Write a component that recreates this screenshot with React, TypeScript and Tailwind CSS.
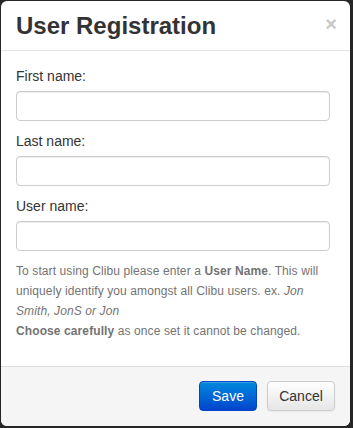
import React from "react";

export default function App() {
  const font = { fontFamily: '"Liberation Sans", Arial, Helvetica, sans-serif' };
  return (
    <div className="w-[353px] h-[428px] bg-[#262626] pt-[1px] pl-[1px]" style={font}>
      <div className="w-[349px] h-[425px] bg-white rounded-[6px] flex flex-col overflow-hidden">
        <div className="h-[49px] border-b border-[#e5e5e5] box-content px-[15px] flex items-center justify-between">
          <h3 className="text-[24px] font-bold leading-[26px] text-[#333] pt-[1px]">User Registration</h3>
          <span className="text-[20px] font-bold leading-[20px] text-[#c8c8c8] mr-[-2px] mt-[-4px]">×</span>
        </div>
        <div className="px-[15px] pt-[15px] flex-1">
          {["First name:", "Last name:", "User name:"].map((l) => (
            <div key={l} className="mb-[10px]">
              <label className="block text-[14px] leading-[20px] text-[#333] mb-[5px]">{l}</label>
              <input
                type="text"
                className="block w-[314px] h-[30px] border border-[#cccccc] rounded-[4px] bg-white shadow-[inset_0_1px_1px_rgba(0,0,0,0.075)] outline-none"
              />
            </div>
          ))}
          <p className="text-[12px] leading-[20px] text-[#737373] w-[312px] tracking-[0.1px]">
            To start using Clibu please enter a <b>User Name</b>. This will uniquely identify you amongst all Clibu users. ex.{" "}
            <i>Jon Smith, JonS or Jon</i>
            <br />
            <b>Choose carefully</b> as once set it cannot be changed.
          </p>
        </div>
        <div className="border-t border-[#dddddd] bg-[#f5f5f5] pt-[14px] pb-[15px] pr-[15px] flex justify-end gap-[10px]">
          <button className="w-[58px] h-[30px] rounded-[4px] text-white text-[14px] border border-[#0044cc] bg-gradient-to-b from-[#0088dd] to-[#0044cc] shadow-[inset_0_1px_0_rgba(255,255,255,0.2)]">
            Save
          </button>
          <button className="w-[68px] h-[30px] rounded-[4px] text-[#333] text-[14px] border border-[#cccccc] bg-gradient-to-b from-white to-[#e6e6e6] shadow-[0_1px_2px_rgba(0,0,0,0.05)]">
            Cancel
          </button>
        </div>
      </div>
    </div>
  );
}
